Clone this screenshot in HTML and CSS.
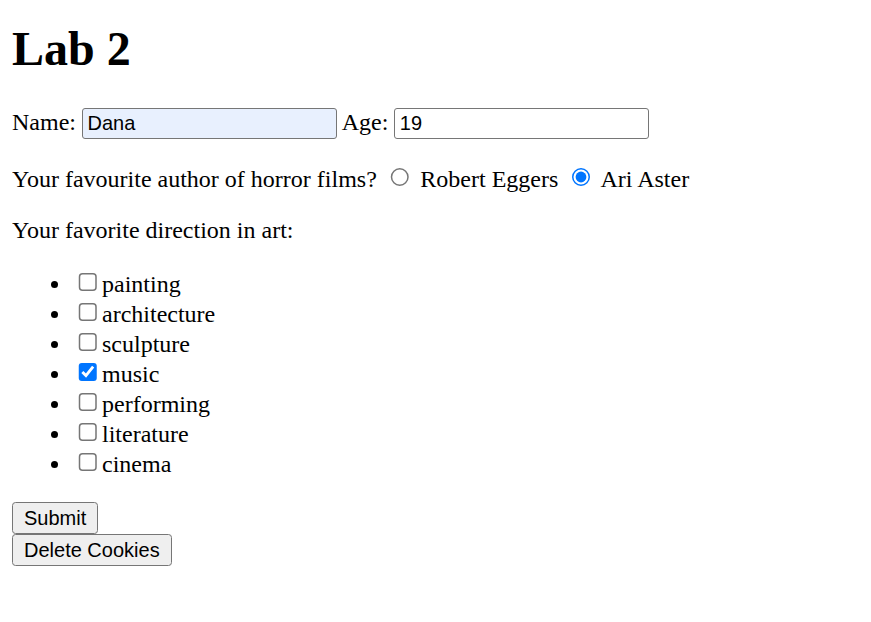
FILE: index.html
```html
<!DOCTYPE html>
<html lang="en" class="page">
<head>
<meta charset="utf-8">
<title>Lab 2</title>
<link rel="stylesheet" href="styles.css">
</head>
<body class="body">
<h1 class="title">Lab 2</h1>
<form class="form">
<p class="row">Name: <input class="field field-autofill" type="text" value="Dana"> Age: <input class="field" type="text" value="19"></p>
<p class="row">Your favourite author of horror films? <input type="radio" name="author"> Robert Eggers <input type="radio" name="author" checked> Ari Aster</p>
<p class="row">Your favorite direction in art:</p>
<ul class="list">
<li><input type="checkbox">painting</li>
<li><input type="checkbox">architecture</li>
<li><input type="checkbox">sculpture</li>
<li><input type="checkbox" checked>music</li>
<li><input type="checkbox">performing</li>
<li><input type="checkbox">literature</li>
<li><input type="checkbox">cinema</li>
</ul>
<input class="btn" type="submit" value="Submit">
</form>
<button class="btn" type="button">Delete Cookies</button>
</body>
</html>
```

FILE: styles.css
```css
.page {
  zoom: 1.5;
}
.body {
  font-family: "Liberation Serif", "Times New Roman", serif;
  color: #000;
  background: #fff;
}
.title {
  margin-top: 6px;
}
.field {
  font-family: "Liberation Sans", Arial, sans-serif;
  font-size: 13.33px;
  width: 170px;
  box-sizing: border-box;
  border: 1px solid #767676;
  border-radius: 2px;
  padding: 2px 3px;
  background-color: #fff;
  color: #000;
}
.field-autofill {
  background-color: #e8f0fe;
}
.btn {
  font-family: "Liberation Sans", Arial, sans-serif;
}
```
